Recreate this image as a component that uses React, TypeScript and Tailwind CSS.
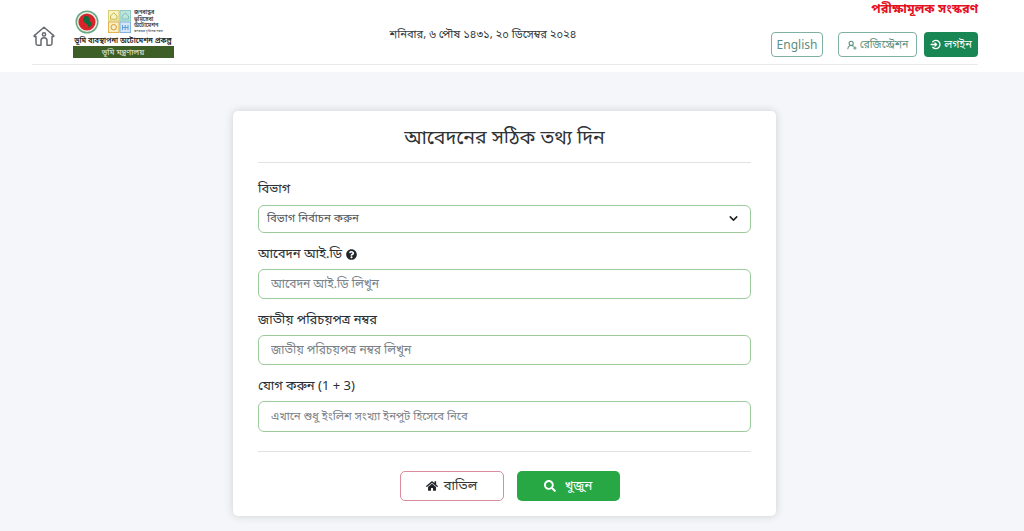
import { FaHome, FaQuestionCircle, FaSearch } from 'react-icons/fa';
import { ChevronDown, UserRoundPlus } from 'lucide-react';

const font = "font-['Noto_Sans','Noto_Sans_Bengali','Lohit_Bengali','Liberation_Sans',sans-serif]";

function HomeIcon() {
  return (
    <svg width="24" height="24" viewBox="0 0 24 24" fill="none" stroke="#666b70" strokeWidth="1.5" strokeLinejoin="round">
      <path d="M4 12.5H2.6c-.5 0-.7-.6-.3-.9L12 3.2l9.7 8.4c.4.3.2.9-.3.9H20v7c0 1-.8 1.7-1.7 1.7H15v-4.4a3 3 0 0 0-6 0v4.4H5.7C4.8 21.2 4 20.5 4 19.5z" />
      <circle cx="12" cy="10.4" r="1.6" />
    </svg>
  );
}

function LoginIcon() {
  return (
    <svg width="11" height="11" viewBox="0 0 20 20" fill="none" stroke="currentColor" strokeWidth="2.4" strokeLinecap="round" strokeLinejoin="round">
      <path d="M5 5a7.5 7.5 0 1 1 0 10" />
      <path d="M2 10h10M9 7l3 3-3 3" />
    </svg>
  );
}

function Logos() {
  return (
    <div className="flex w-[102px] flex-col items-center">
      <div className="flex h-[25px] items-center">
        <svg width="24" height="24" viewBox="0 0 24 24" className="ml-[-1px]">
          <circle cx="12" cy="12" r="11.5" fill="#6aa883" />
          <circle cx="12" cy="12" r="10" fill="#eef2ea" />
          <circle cx="12" cy="12" r="8.6" fill="#d8232a" />
          <path d="M10 5.5l3.5 1 1 4 2.5 3.5-3 4-1.5-3.5-3.5-2.5-1-3z" fill="#0f6b3c" />
        </svg>
        <svg width="23" height="23" viewBox="0 0 23 23" className="ml-[9px]">
          <rect x="0.5" y="0.5" width="10.5" height="10.5" fill="#f7f3c4" stroke="#d6cd72" />
          <rect x="12" y="0.5" width="10.5" height="10.5" fill="#bfe3dc" stroke="#8accc0" />
          <rect x="0.5" y="12" width="10.5" height="10.5" fill="#fbeec6" stroke="#e3b450" />
          <rect x="12" y="12" width="10.5" height="10.5" fill="#d5e6f7" stroke="#82b3df" />
          <path d="M2.5 6l3.2-3.2L9 6v3.2H2.5z" fill="none" stroke="#c4b94c" />
          <path d="M14 6l3.2-3 3.3 3v3h-6.5z" fill="none" stroke="#7cc4b8" />
          <circle cx="5.7" cy="17.2" r="2.7" fill="none" stroke="#d59a2d" />
          <path d="M14.5 15v5M17.2 15v5M20 15v5M14.5 17.5h5.5" fill="none" stroke="#5d9fd4" />
        </svg>
        <div className="ml-[3px] flex w-[36px] flex-col text-[5.5px] leading-[6.5px] font-semibold whitespace-nowrap text-[#3a3a3a]">
          <span>জনবান্ধব</span>
          <span>ভূমিসেবা</span>
          <span>অটোমেশন</span>
          <span className="text-[3px] leading-[5px] font-normal">জনবান্ধব ভূমিসেবা সবার</span>
        </div>
      </div>
      <span className="mt-[1px] text-[7.4px] leading-[10px] font-semibold whitespace-nowrap text-[#222]">ভূমি ব্যবস্থাপনা অটোমেশন প্রকল্প</span>
      <div className="mt-[1px] flex h-[12px] w-[101px] items-center justify-center bg-[#3d5f27] text-[8px] text-[#e8efe0]">ভূমি মন্ত্রণালয়</div>
    </div>
  );
}

function Field({ label, placeholder, hint, h, size }: { label: string; placeholder: string; hint?: boolean; h: string; size: string }) {
  return (
    <div className="flex flex-col">
      <label className="flex h-[36px] items-center gap-1 pt-[6px] text-[13px] text-[#2b2f33]">
        {label}
        {hint && <FaQuestionCircle className="text-[11px] text-[#212529]" />}
      </label>
      <input
        readOnly
        placeholder={placeholder}
        className={`${h} ${size} w-full rounded-[6px] border border-[#9ccb9c] bg-white px-3 pb-[2px] outline-none placeholder:text-[#7b8288]`}
      />
    </div>
  );
}

export default function App() {
  return (
    <div className={`${font} flex h-[531px] w-full flex-col overflow-hidden bg-[#f4f6fa]`}>
      <header className="h-[72px] bg-white pr-[46px] pl-[32px]">
        <div className="flex h-[65px] items-center border-b border-[#e7e9ec]">
          <div className="mt-[8px]">
            <HomeIcon />
          </div>
          <div className="mt-[3px] ml-[16px]">
            <Logos />
          </div>
          <div className="mt-[4px] flex-1 pl-[21px] text-center text-[11.2px] text-[#33383c]">শনিবার, ৬ পৌষ ১৪৩১, ২০ ডিসেম্বর ২০২৪</div>
          <div className="flex h-full flex-col items-end">
            <span className="h-[32px] text-[12.7px] leading-[16px] font-bold text-[#e4101f]">পরীক্ষামূলক সংস্করণ</span>
            <div className="flex items-center">
              <span className="mr-[15px] flex h-[25px] w-[52px] items-center justify-center rounded-[4px] border border-[#7fb0a2] text-[12px] text-[#5c8f80]">English</span>
              <span className="mr-[7px] flex h-[25px] w-[79px] items-center justify-center gap-[3px] rounded-[4px] border border-[#7fb0a2] text-[10.5px] text-[#5c8f80]">
                <UserRoundPlus className="h-[10px] w-[10px]" strokeWidth={2.5} />
                রেজিস্ট্রেশন
              </span>
              <span className="flex h-[25px] w-[54px] items-center justify-center gap-[3px] rounded-[4px] bg-[#198754] text-[11px] text-white">
                <LoginIcon />
                লগইন
              </span>
            </div>
          </div>
        </div>
      </header>

      <main className="flex justify-center pt-[39px] pr-[15px]">
        <section className="h-[405px] w-[543px] rounded-[5px] bg-white px-[25px] shadow-[0_0_8px_rgba(0,0,0,0.16)]">
          <h1 className="flex h-[52px] items-center justify-center border-b border-[#dfe1e3] text-[19.5px] text-[#2f3336]">আবেদনের সঠিক তথ্য দিন</h1>
          <div className="pt-[8px]">
            <div className="flex flex-col">
              <label className="flex h-[34px] items-center pt-[2px] text-[13px] text-[#2b2f33]">বিভাগ</label>
              <div className="flex h-[28px] items-center justify-between rounded-[6px] border border-[#9ccb9c] pr-[10px] pb-[2px] pl-[8px] text-[11.4px] text-[#50565b]">
                বিভাগ নির্বাচন করুন
                <ChevronDown className="h-[13px] w-[13px] text-[#222]" strokeWidth={2.8} />
              </div>
            </div>
            <Field label="আবেদন আই.ডি" placeholder="আবেদন আই.ডি লিখুন" hint h="h-[30px]" size="text-[12px]" />
            <Field label="জাতীয় পরিচয়পত্র নম্বর" placeholder="জাতীয় পরিচয়পত্র নম্বর লিখুন" h="h-[30px]" size="text-[12px]" />
            <Field label="যোগ করুন (1 + 3)" placeholder="এখানে শুধু ইংলিশ সংখ্যা ইনপুট হিসেবে নিবে" h="h-[31px]" size="text-[11.3px]" />
          </div>
          <div className="mt-[19px] flex justify-center gap-[13px] border-t border-[#dfe1e3] pt-[19px] pl-[10px]">
            <button className="flex h-[30px] w-[104px] items-center justify-center gap-[6px] rounded-[5px] border border-[#d98c9a] text-[13px] text-[#333]">
              <FaHome className="text-[12px] text-[#212529]" />
              বাতিল
            </button>
            <button className="flex h-[30px] w-[103px] items-center justify-center gap-[9px] rounded-[5px] bg-[#28a745] text-[13px] text-white">
              <FaSearch className="text-[12px]" />
              খুজুন
            </button>
          </div>
        </section>
      </main>
    </div>
  );
}
